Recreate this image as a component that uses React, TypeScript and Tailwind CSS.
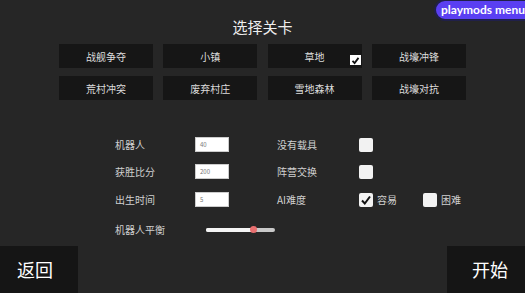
import React from 'react';

const levels = ['战舰争夺', '小镇', '草地', '战壕冲锋', '荒村冲突', '废弃村庄', '雪地森林', '战壕对抗'];

function Check({ checked }: { checked?: boolean }) {
    return (
        <div className="w-[14px] h-[14px] rounded-[2px] bg-[#f2f2f2] flex items-center justify-center">
            {checked && (
                <svg width="12" height="12" viewBox="0 0 12 12">
                    <path d="M2 6.5 L4.8 9.5 L10 2.5" fill="none" stroke="#111" strokeWidth="2" />
                </svg>
            )}
        </div>
    );
}

function NumInput({ value }: { value: string }) {
    return (
        <div className="w-[34px] h-[15px] bg-white border border-[#ccc] flex items-center pl-[4px] text-[6px] text-[#777]">
            {value}
        </div>
    );
}

export default function App() {
    return (
        <div
            className="relative w-[525px] h-[293px] bg-[#262626] flex flex-col overflow-hidden text-[#d8d8d8]"
            style={{ fontFamily: '"Noto Sans CJK SC", "Noto Sans", sans-serif' }}
        >
            <div
                className="absolute left-[434px] top-[-1px] w-[95px] h-[22px] pl-[5px] rounded-l-full bg-[#5a3ff2] border-2 border-[#20204a] flex items-center text-white text-[12px] font-bold whitespace-nowrap"
                style={{ fontFamily: 'Lato, "Noto Sans", sans-serif' }}
            >
                playmods menu
            </div>

            <div className="pt-[16px] h-[37px] text-center text-[15px] leading-[21px] text-[#eee]">选择关卡</div>

            <div className="mt-[7px] pl-[59px] grid grid-cols-[94px_94px_94px_94px] gap-x-[10.3px] gap-y-[8px]">
                {levels.map((name) => (
                    <div key={name} className="relative h-[24px] bg-[#161616] flex items-center justify-center text-[10px] text-[#ddd]">
                        {name}
                        {name === '草地' && (
                            <div className="absolute left-[82px] top-[11px] w-[11px] h-[10px] bg-white flex items-center justify-center">
                                <svg width="9" height="9" viewBox="0 0 12 12">
                                    <path d="M2 6.5 L4.8 9.5 L10 2.5" fill="none" stroke="#111" strokeWidth="2.4" />
                                </svg>
                            </div>
                        )}
                    </div>
                ))}
            </div>

            <div className="mt-[37px] pl-[115px] flex flex-col text-[10px] text-[#d0d0d0]">
                <div className="flex items-center h-[15px]">
                    <span className="w-[80px]">机器人</span>
                    <NumInput value="40" />
                    <span className="ml-[48px] w-[82px]">没有载具</span>
                    <Check />
                </div>
                <div className="flex items-center h-[15px] mt-[12px]">
                    <span className="w-[80px]">获胜比分</span>
                    <NumInput value="200" />
                    <span className="ml-[48px] w-[82px]">阵营交换</span>
                    <Check />
                </div>
                <div className="flex items-center h-[15px] mt-[13px]">
                    <span className="w-[80px]">出生时间</span>
                    <NumInput value="5" />
                    <span className="ml-[48px] w-[82px]">AI难度</span>
                    <Check checked />
                    <span className="ml-[4px] w-[46px]">容易</span>
                    <Check />
                    <span className="ml-[4px]">困难</span>
                </div>
                <div className="flex items-center h-[15px] mt-[15px]">
                    <span className="w-[91px]">机器人平衡</span>
                    <div className="relative w-[69px] h-[4px] rounded-full bg-[#c8c8c8]">
                        <div className="h-full w-[47px] rounded-full bg-[#f4f4f4]" />
                        <div className="absolute left-[44px] top-[-2px] w-[7px] h-[7px] rounded-full bg-[#e86f6f]" />
                    </div>
                </div>
            </div>

            <div className="mt-auto flex justify-between">
                <div className="w-[78px] h-[47px] bg-[#151515] flex items-center pl-[17px] text-[18px] text-white">返回</div>
                <div className="w-[78px] h-[47px] bg-[#151515] flex items-center pl-[25px] text-[18px] text-white">开始</div>
            </div>
        </div>
    );
}
